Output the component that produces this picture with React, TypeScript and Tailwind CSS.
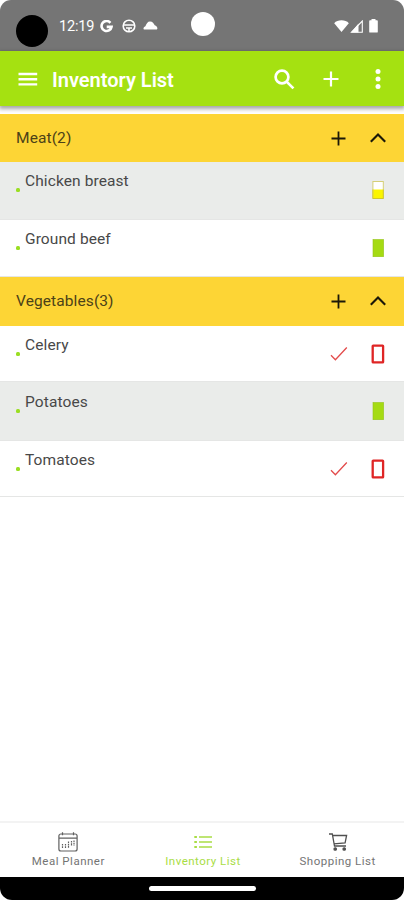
import { useState } from 'react';

type Level = 'full' | 'half' | 'empty';
type Item = { name: string, level: Level, needed?: boolean, className: string };
type Category = { name: string, className: string, items: Item[] };

const categories: Category[] = [
  {
    name: 'Meat',
    className: 'h-12',
    items: [
      { name: 'Chicken breast', level: 'half', className: 'h-[58px] bg-[#eaecea]' },
      { name: 'Ground beef', level: 'full', className: 'h-[57px] bg-white' },
    ],
  },
  {
    name: 'Vegetables',
    className: 'h-[49px] pb-px',
    items: [
      { name: 'Celery', level: 'empty', needed: true, className: 'h-14 bg-white' },
      { name: 'Potatoes', level: 'full', className: 'h-[59px] bg-[#eaecea] pt-px' },
      { name: 'Tomatoes', level: 'empty', needed: true, className: 'h-14 bg-white' },
    ],
  },
];

function StatusBar() {
  return (
    <div className="flex h-[51px] shrink-0 items-start rounded-t-[11px] bg-[#757575] text-white">
      <div className="mt-[15px] ml-4 size-8 rounded-full bg-black" />
      <span className="mt-[17px] ml-[11px] w-[36px] text-[14.5px] leading-5 tracking-[-0.2px] whitespace-nowrap">12:19</span>
      <svg className="mt-5 ml-[5px]" width="13" height="13" viewBox="0 0 13 13" fill="none" stroke="#fff" strokeWidth="2.6">
        <path d="M10.4 2.8A5 5 0 1 0 11.5 6.9H6.7" />
      </svg>
      <svg className="mt-[19px] ml-[9px]" width="14" height="14" viewBox="0 0 14 14" fill="none" stroke="#fff" strokeWidth="1.6">
        <circle cx="7" cy="7" r="5.8" />
        <path d="M1.2 6h11.6M4 9h6M7 9v3.5" />
      </svg>
      <svg className="mt-[21px] ml-[7px]" width="15" height="9" viewBox="0 0 15 9" fill="#fff">
        <path d="M1.2 8.6C-.1 8.2.4 5.8 2.4 5.2 3.4 2.4 4.8.3 7.1.4 9.6.5 10.8 2.2 11.7 4.2 14 4.7 15.2 7.6 13.8 8.6Z" />
      </svg>
      <div className="mt-3 ml-[33px] size-6 rounded-full bg-white" />
      <svg className="mt-5 ml-[119px]" width="15" height="12" viewBox="0 0 15 12" fill="#fff">
        <path d="M7.5 12 .2 3.2C3.5-.6 11.5-.6 14.8 3.2Z" />
      </svg>
      <svg className="mt-5 ml-px" width="13" height="13" viewBox="0 0 13 13" fill="none" stroke="#fff">
        <path d="M8.5 3.5v9H1.2Z" fill="#fff" stroke="none" />
        <path d="M1.5 12.2 12.3 1v11.2Z" strokeWidth="1.1" />
      </svg>
      <svg className="mt-[19px] ml-[6px]" width="9" height="14" viewBox="0 0 9 14" fill="#fff">
        <path d="M2.5 0h4v1.3H8q.8 0 .8.9v10.5q0 .9-.8.9H1q-.8 0-.8-.9V2.2q0-.9.8-.9h1.5Z" />
      </svg>
    </div>
  );
}

function AppBar() {
  return (
    <header className="relative z-10 flex h-[55px] shrink-0 items-center bg-[#a5e111] text-white shadow-[0_2px_4px_1px_rgba(0,0,0,0.35)]">
      <button className="ml-[18px]" aria-label="Menu">
        <svg width="20" height="14" viewBox="0 0 20 14" fill="none" stroke="#fff" strokeWidth="2.4">
          <path d="M.5 2h18.7M.5 7.2h18.7M.5 12.4h18.7" />
        </svg>
      </button>
      <h1 className="mt-[3px] ml-[14px] w-[220px] text-[20px] leading-6 font-semibold">Inventory List</h1>
      <button className="mt-px ml-[2px]" aria-label="Search">
        <svg width="21" height="21" viewBox="0 0 21 21" fill="none" stroke="#fff" strokeWidth="2.7">
          <circle cx="8" cy="8" r="6.4" />
          <path d="m12.6 12.6 6.8 6.8" />
        </svg>
      </button>
      <button className="mt-px ml-[28px]" aria-label="Add item">
        <svg width="16" height="16" viewBox="0 0 16 16" stroke="#fff" strokeWidth="2.2">
          <path d="M.5 8h15M8 .5v15" />
        </svg>
      </button>
      <button className="mt-px ml-[36px]" aria-label="More">
        <svg width="6" height="20" viewBox="0 0 6 20" fill="#fff">
          <circle cx="3" cy="2.5" r="2.5" />
          <circle cx="3" cy="10" r="2.5" />
          <circle cx="3" cy="17.5" r="2.5" />
        </svg>
      </button>
    </header>
  );
}

function LevelIcon({ level }: { level: Level }) {
  return (
    <svg width="14" height="20" viewBox="0 0 14 20">
      {level === 'full' && <rect x="2" y="1.5" width="10.6" height="17.2" fill="#a5db12" stroke="#94c41a" strokeWidth=".6" />}
      {level === 'half' && (
        <>
          <rect x="1.9" y="1.5" width="10.4" height="17" fill="#fff" stroke="#d5cf77" />
          <path d="M2.2 9.5h9.8v8.8H2.2Z" fill="#fbf500" />
          <path d="M1.9 9.5v9h10.4v-9" fill="none" stroke="#d0c72b" />
        </>
      )}
      {level === 'empty' && <rect x="1.7" y="1.6" width="10.4" height="16.8" rx=".5" fill="#fff" stroke="#df2525" strokeWidth="2.3" />}
    </svg>
  );
}

function ItemRow({ item }: { item: Item }) {
  return (
    <li className={`flex border-b border-[#e5e6e5] pr-[19px] pl-4 ${item.className}`}>
      <span className="mt-[26px] size-1 rounded-[1.5px] bg-[#9ade22]" />
      <span className="mt-[9px] ml-[5px] flex-1 text-[15.5px] leading-5 tracking-[0.1px] text-[#484848]">{item.name}</span>
      {item.needed && (
        <svg className="mt-5 mr-[23px]" width="18" height="16" viewBox="0 0 18 16" fill="none" stroke="#e34b4b" strokeWidth="1.3">
          <path d="m1 9.3 4.4 4.5L16.8 1.5" />
        </svg>
      )}
      <div className="mt-[18px]">
        <LevelIcon level={item.level} />
      </div>
    </li>
  );
}

function CategorySection({ category }: { category: Category }) {
  const [open, setOpen] = useState(true);

  return (
    <section>
      <div className={`flex items-center bg-[#fdd535] pr-[18px] pl-4 ${category.className}`}>
        <h2 className="flex-1 text-[15.5px] leading-5 tracking-[0.1px] text-[#4c4218]">
          {category.name}({category.items.length})
        </h2>
        <button className="mr-6" aria-label="Add">
          <svg width="15" height="15" viewBox="0 0 15 15" stroke="#1b1808" strokeWidth="1.8">
            <path d="M.5 7.5h14M7.5.5v14" />
          </svg>
        </button>
        <button onClick={() => setOpen(!open)} aria-label="Toggle">
          <svg width="16" height="10" viewBox="0 0 16 10" fill="none" stroke="#1b1808" strokeWidth="2.1">
            <path d="M.8 8.8 8 1.6l7.2 7.2" />
          </svg>
        </button>
      </div>
      {open && (
        <ul>
          {category.items.map((item) => <ItemRow key={item.name} item={item} />)}
        </ul>
      )}
    </section>
  );
}

function BottomNav() {
  return (
    <nav className="-mr-px grid h-14 shrink-0 grid-cols-3 border-t-2 border-[#f3f3f3] bg-white pl-px text-[11.5px] leading-4 tracking-[0.5px] text-[#747474]">
      <a className="flex flex-col items-center pt-[9px]">
        <svg width="20" height="20" viewBox="0 0 20 20" fill="none" stroke="#606060" strokeWidth="1.2">
          <rect x=".9" y="2" width="18.2" height="17" rx="2" />
          <path d="M1 6.2h18M4.5.3v3M15.5.3v3" />
          <path d="M4.5 12v4.5M7.5 12v4.5M10.5 9.5v7M13.5 9v5M16 8.5v5" strokeDasharray="1.6 .7" />
        </svg>
        <span className="mt-px">Meal Planner</span>
      </a>
      <a className="flex flex-col items-center pt-[9px] text-[#a9dd45]">
        <svg width="20" height="20" viewBox="0 0 20 20" fill="none" stroke="#a9dd45" strokeWidth="1.6">
          <path d="M6 5h13M6 10h13M6 15h13" />
          <path d="M1.3 5h2.6M1.3 10h2.6M1.3 15h2.6" strokeWidth="2" />
        </svg>
        <span className="mt-px">Inventory List</span>
      </a>
      <a className="flex flex-col items-center pt-[9px]">
        <svg width="20" height="20" viewBox="0 0 20 20" fill="none" stroke="#505050" strokeWidth="1.3">
          <path d="M1 2h3.3l2.2 12h11.5M4.6 3.5h14l-1.5 7.4-11.2 1" />
          <circle cx="7.2" cy="17" r="1.2" fill="#505050" />
          <circle cx="16.2" cy="17" r="1.2" fill="#505050" />
        </svg>
        <span className="mt-px">Shopping List</span>
      </a>
    </nav>
  );
}

export default function App() {
  return (
    <div className="flex h-[900px] w-[404px] flex-col overflow-hidden bg-white font-[Roboto,'Liberation_Sans',sans-serif]">
      <StatusBar />
      <AppBar />
      <main className="flex-1 pt-2">
        {categories.map((category) => <CategorySection key={category.name} category={category} />)}
      </main>
      <BottomNav />
      <div className="flex h-[23px] shrink-0 justify-center rounded-b-[12px] bg-black pt-[9px]">
        <div className="h-[5px] w-[107px] rounded-full bg-white" />
      </div>
    </div>
  );
}
